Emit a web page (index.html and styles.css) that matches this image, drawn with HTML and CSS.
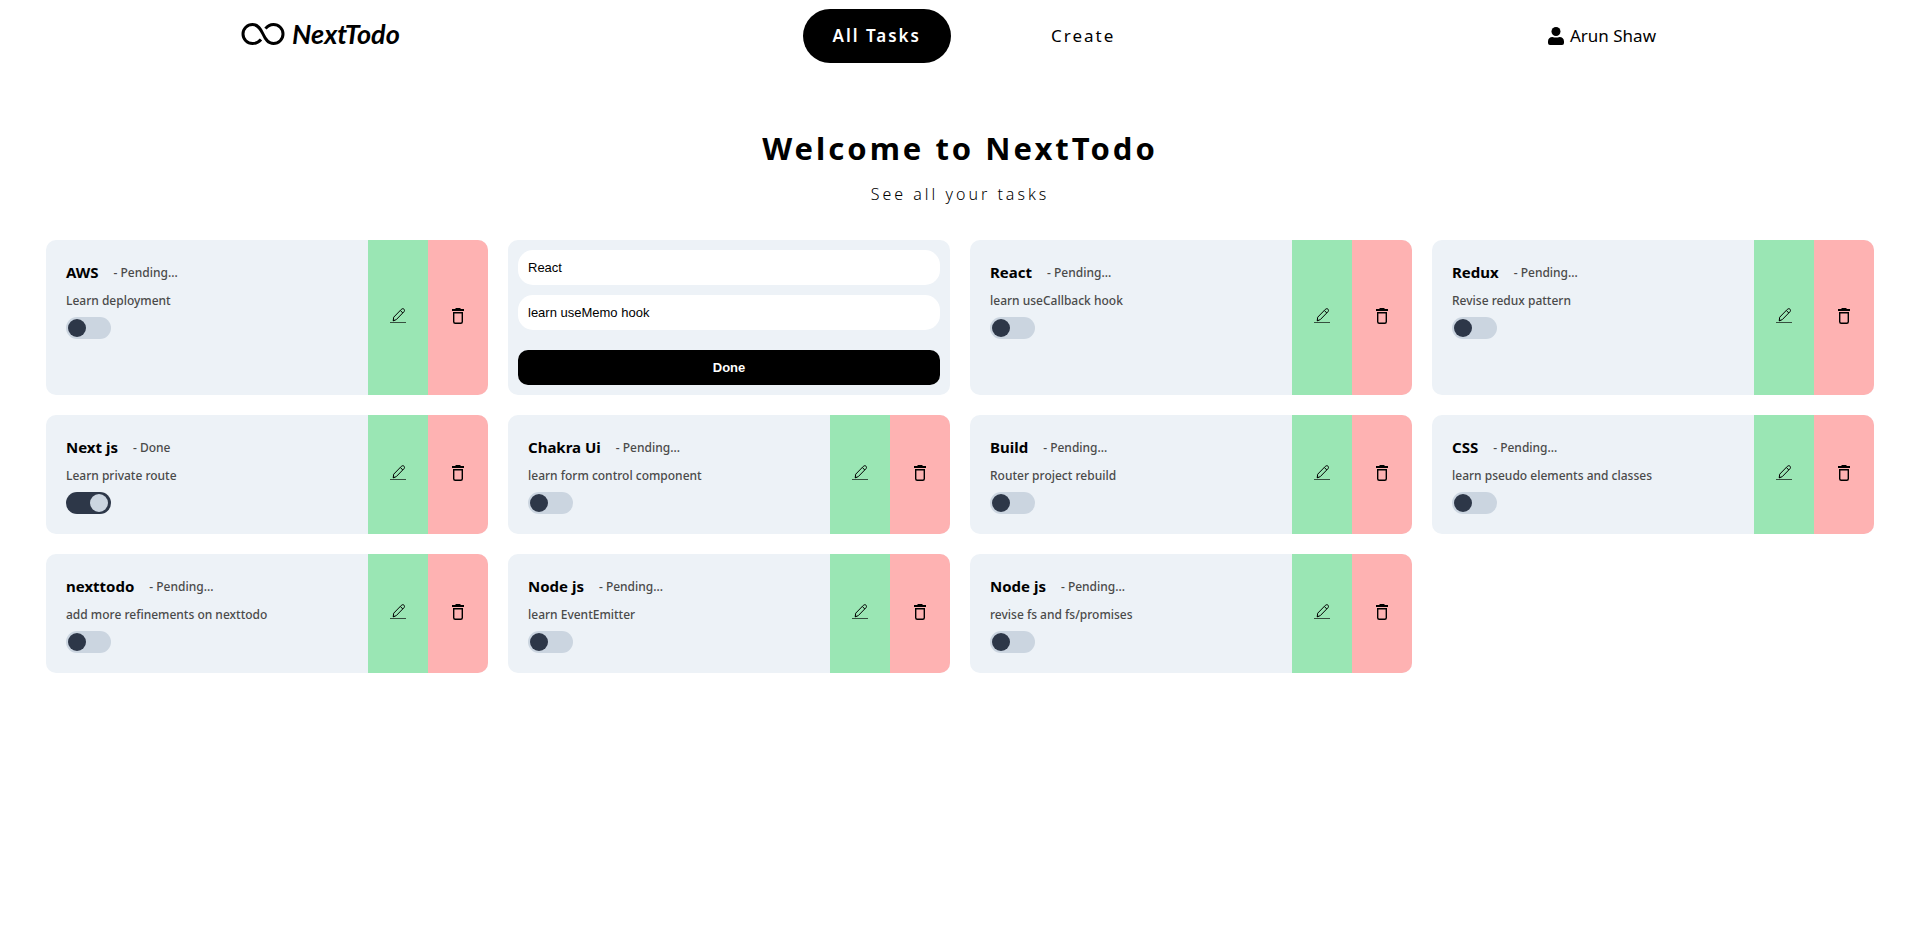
FILE: index.html
```html
<!DOCTYPE html>
<html lang="en">
<head>
<meta charset="utf-8">
<title>NextTodo</title>
<link rel="stylesheet" href="styles.css">
</head>
<body>
<svg class="sprite" aria-hidden="true">
  <symbol id="edit" viewBox="0 0 16 16">
    <path d="M3.200 12.800 3.700 9.200 11.300 1.400c.9-.9 2-.9 2.700-.2s.7 1.800-.2 2.700L6.200 11.700Z M10.500 2.600l2.300 2.400" fill="none" stroke="#000" stroke-width="1" stroke-linejoin="round"/>
    <path d="M3 13.200l.5-2 1.400 1.400Z"/>
    <path d="M0 14.500h16" stroke="#000" stroke-opacity=".65" stroke-width="1"/>
  </symbol>
  <symbol id="trash" viewBox="0 0 16 16">
    <path d="M5.500 0h5v1H14v2H2V1h3.500Z"/>
    <path d="M3.700 4.700h8.600v9.100q0 1.500-1.500 1.500H5.200q-1.500 0-1.500-1.500Z" fill="none" stroke="#000" stroke-width="1.400"/>
  </symbol>
</svg>
<header class="header">
  <a class="logo" href="#">
    <svg class="logo-mark" viewBox="0 0 44 24" aria-hidden="true"><path d="M20 17.500C17.500 20.500 14.500 21.500 11.500 21.500a9.500 9.500 0 1 1 0-19c5.500 0 8 4 10.500 9.500s5 9.500 10.500 9.500a9.500 9.500 0 1 0 0-19c-3.500 0-6 1.500-8 4.200" fill="none" stroke="#000" stroke-width="3"/></svg>
    <span class="logo-text">NextTodo</span>
  </a>
  <nav class="nav">
    <a class="nav-link active" href="#">All Tasks</a>
    <a class="nav-link" href="#">Create</a>
  </nav>
  <a class="user" href="#">
    <svg class="user-icon" viewBox="0 0 16 18" aria-hidden="true"><circle cx="8" cy="4.500" r="4.500"/><path d="M0 16v-1.500C0 11.500 1.800 10 4.500 10c2.300.8 4.700.8 7 0 2.700 0 4.500 1.500 4.500 4.500V16q0 2-2 2H2q-2 0-2-2Z"/></svg>
    <span>Arun Shaw</span>
  </a>
</header>
<main class="main">
  <h1 class="title">Welcome to NextTodo</h1>
  <p class="subtitle">See all your tasks</p>
  <section class="tasks">
    <article class="card">
      <div class="body"><div class="head"><h2 class="name">AWS</h2><span class="status">- Pending...</span></div><p class="desc">Learn deployment</p><input class="toggle" type="checkbox" aria-label="AWS done"></div>
      <button class="action edit" aria-label="Edit"><svg class="icon"><use href="#edit"/></svg></button><button class="action delete" aria-label="Delete"><svg class="icon"><use href="#trash"/></svg></button>
    </article>
    <form class="card form">
      <input class="field" type="text" value="React" aria-label="Title">
      <input class="field" type="text" value="learn useMemo hook" aria-label="Description">
      <button class="done" type="button">Done</button>
    </form>
    <article class="card">
      <div class="body"><div class="head"><h2 class="name">React</h2><span class="status">- Pending...</span></div><p class="desc">learn useCallback hook</p><input class="toggle" type="checkbox" aria-label="React done"></div>
      <button class="action edit" aria-label="Edit"><svg class="icon"><use href="#edit"/></svg></button><button class="action delete" aria-label="Delete"><svg class="icon"><use href="#trash"/></svg></button>
    </article>
    <article class="card">
      <div class="body"><div class="head"><h2 class="name">Redux</h2><span class="status">- Pending...</span></div><p class="desc">Revise redux pattern</p><input class="toggle" type="checkbox" aria-label="Redux done"></div>
      <button class="action edit" aria-label="Edit"><svg class="icon"><use href="#edit"/></svg></button><button class="action delete" aria-label="Delete"><svg class="icon"><use href="#trash"/></svg></button>
    </article>
    <article class="card">
      <div class="body"><div class="head"><h2 class="name">Next js</h2><span class="status">- Done</span></div><p class="desc">Learn private route</p><input class="toggle" type="checkbox" checked aria-label="Next js done"></div>
      <button class="action edit" aria-label="Edit"><svg class="icon"><use href="#edit"/></svg></button><button class="action delete" aria-label="Delete"><svg class="icon"><use href="#trash"/></svg></button>
    </article>
    <article class="card">
      <div class="body"><div class="head"><h2 class="name">Chakra Ui</h2><span class="status">- Pending...</span></div><p class="desc">learn form control component</p><input class="toggle" type="checkbox" aria-label="Chakra Ui done"></div>
      <button class="action edit" aria-label="Edit"><svg class="icon"><use href="#edit"/></svg></button><button class="action delete" aria-label="Delete"><svg class="icon"><use href="#trash"/></svg></button>
    </article>
    <article class="card">
      <div class="body"><div class="head"><h2 class="name">Build</h2><span class="status">- Pending...</span></div><p class="desc">Router project rebuild</p><input class="toggle" type="checkbox" aria-label="Build done"></div>
      <button class="action edit" aria-label="Edit"><svg class="icon"><use href="#edit"/></svg></button><button class="action delete" aria-label="Delete"><svg class="icon"><use href="#trash"/></svg></button>
    </article>
    <article class="card">
      <div class="body"><div class="head"><h2 class="name">CSS</h2><span class="status">- Pending...</span></div><p class="desc">learn pseudo elements and classes</p><input class="toggle" type="checkbox" aria-label="CSS done"></div>
      <button class="action edit" aria-label="Edit"><svg class="icon"><use href="#edit"/></svg></button><button class="action delete" aria-label="Delete"><svg class="icon"><use href="#trash"/></svg></button>
    </article>
    <article class="card">
      <div class="body"><div class="head"><h2 class="name">nexttodo</h2><span class="status">- Pending...</span></div><p class="desc">add more refinements on nexttodo</p><input class="toggle" type="checkbox" aria-label="nexttodo done"></div>
      <button class="action edit" aria-label="Edit"><svg class="icon"><use href="#edit"/></svg></button><button class="action delete" aria-label="Delete"><svg class="icon"><use href="#trash"/></svg></button>
    </article>
    <article class="card">
      <div class="body"><div class="head"><h2 class="name">Node js</h2><span class="status">- Pending...</span></div><p class="desc">learn EventEmitter</p><input class="toggle" type="checkbox" aria-label="Node js done"></div>
      <button class="action edit" aria-label="Edit"><svg class="icon"><use href="#edit"/></svg></button><button class="action delete" aria-label="Delete"><svg class="icon"><use href="#trash"/></svg></button>
    </article>
    <article class="card">
      <div class="body"><div class="head"><h2 class="name">Node js</h2><span class="status">- Pending...</span></div><p class="desc">revise fs and fs/promises</p><input class="toggle" type="checkbox" aria-label="Node js done"></div>
      <button class="action edit" aria-label="Edit"><svg class="icon"><use href="#edit"/></svg></button><button class="action delete" aria-label="Delete"><svg class="icon"><use href="#trash"/></svg></button>
    </article>
  </section>
</main>
</body>
</html>
```
FILE: styles.css
```css
* { box-sizing: border-box; margin: 0; padding: 0; }
body { background: #fff; color: #000; font-family: "Segoe UI", "Noto Sans", "Open Sans", sans-serif; }
a { color: inherit; text-decoration: none; }
.sprite { display: none; }

.header { display: flex; justify-content: space-between; align-items: center; padding: 9px 264px 0 240px; }
.logo { display: flex; align-items: center; gap: 6px; padding-bottom: 4px; }
.logo-mark { width: 46px; height: 24px; }
.logo-text { font: italic 700 27px/32px Lato, sans-serif; }
.nav { display: flex; gap: 70px; }
.nav-link { padding: 15px 30px; border-radius: 27px; font-size: 17px; line-height: 24px; letter-spacing: 2px; }
.nav-link.active { background: #000; color: #fff; font-weight: 600; }
.user { display: flex; align-items: center; gap: 6px; font-size: 17px; line-height: 24px; }
.user-icon { width: 16px; height: 18px; }

.main { padding: 63px 46px; }
.title { font-size: 31px; line-height: 44px; font-weight: 700; letter-spacing: 3px; text-align: center; }
.subtitle { margin-top: 12px; font-size: 16px; line-height: 24px; font-weight: 300; letter-spacing: 3px; text-align: center; }

.tasks { display: grid; grid-template-columns: repeat(4, 1fr); gap: 20px; margin-top: 34px; }
.card { display: flex; border-radius: 10px; overflow: hidden; background: #edf2f7; }
.body { flex: 1; padding: 20px; }
.head { display: flex; align-items: center; gap: 15px; }
.name { font-size: 15px; line-height: 24px; font-weight: 700; }
.status, .desc { color: #4a4a4a; font-size: 12px; line-height: 17px; font-weight: 500; }
.desc { margin: 8px 0; }

.toggle { appearance: none; display: block; width: 45px; height: 22px; padding: 2px; border-radius: 11px; background: #cbd5e0; }
.toggle::before { content: ""; display: block; width: 18px; height: 18px; border-radius: 50%; background: #2d3748; }
.toggle:checked { background: #2d3748; }
.toggle:checked::before { margin-left: 22px; background: #cbd5e0; }

.action { display: flex; align-items: center; justify-content: center; width: 60px; padding-bottom: 3px; border: 0; }
.edit { background: #9ae6b4; }
.delete { background: #feb2b2; }
.icon { width: 16px; height: 16px; }

.form { flex-direction: column; gap: 10px; padding: 10px; }
.field, .done { width: 100%; height: 35px; border: 0; font-family: "Liberation Sans", Arial, sans-serif; font-size: 13px; }
.field { padding: 0 10px; border-radius: 15px; background: #fff; }
.done { margin-top: 10px; border-radius: 10px; background: #000; color: #fff; font-weight: 700; }
```
